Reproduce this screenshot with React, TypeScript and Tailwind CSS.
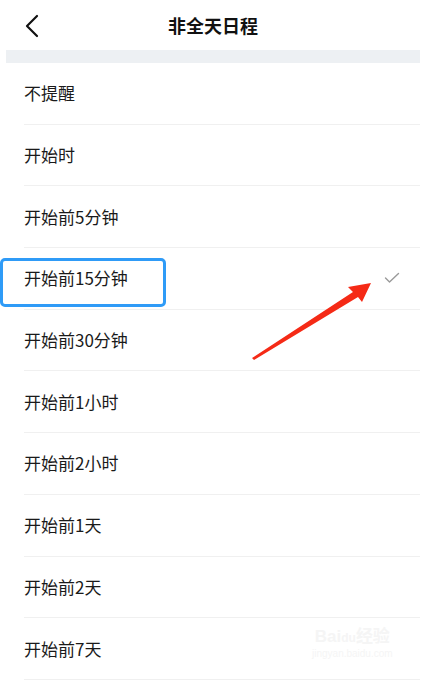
import React from "react";

const items = [
  "不提醒",
  "开始时",
  "开始前5分钟",
  "开始前15分钟",
  "开始前30分钟",
  "开始前1小时",
  "开始前2小时",
  "开始前1天",
  "开始前2天",
  "开始前7天",
];

export default function App() {
  return (
    <div
      className="relative w-[430px] h-[682px] overflow-hidden bg-white"
      style={{ fontFamily: '"Noto Sans CJK SC", "Noto Sans", sans-serif' }}
    >
      <div className="flex h-[50px] w-[426px] items-center justify-center relative">
        <svg
          className="absolute left-[24px] top-[14px]"
          width="16"
          height="24"
          viewBox="0 0 16 24"
          fill="none"
        >
          <path d="M13 2 L3 12 L13 22" stroke="#111" strokeWidth="2.2" strokeLinecap="round" strokeLinejoin="round" />
        </svg>
        <span className="text-[18px] font-bold text-[#111] leading-none">非全天日程</span>
      </div>
      <div className="ml-[6px] w-[414px] h-[13px] bg-[#edf0f3]" />
      <div className="w-[420px]">
        {items.map((t, i) => (
          <div key={t} className="ml-[24px] h-[61.7px] flex items-center justify-between border-b border-[#f0f0f0] pr-[20px]">
            <span className="text-[17px] text-[#1a1a1a] leading-none -mt-[1px]">{t}</span>
            {i === 3 && (
              <svg width="16" height="12" viewBox="0 0 16 12" fill="none">
                <path d="M1.5 6 L5.5 10 L14.5 1.5" stroke="#9a9a9a" strokeWidth="1.4" strokeLinecap="round" strokeLinejoin="round" />
              </svg>
            )}
          </div>
        ))}
      </div>

      {/* blue highlight box */}
      <div className="absolute left-[0px] top-[258px] w-[166px] h-[49px] border-[3px] border-[#2f9bf7] rounded-[5px]" />

      {/* red arrow */}
      <svg className="absolute left-0 top-0" width="430" height="682" viewBox="0 0 430 682">
        <path d="M252 358 L353 292 L348 287 L371 283 L362 302 L358 297 L254 360 Z" fill="#f52a16" />
      </svg>

      {/* watermark */}
      <div className="absolute left-[312px] top-[628px] flex flex-col items-center text-[#f5f5f5] leading-none">
        <span className="text-[17px] font-bold" style={{ fontFamily: '"Liberation Sans", "Noto Sans CJK SC", sans-serif' }}>
          Bai<span className="text-[12px]">du</span>经验
        </span>
        <span className="text-[10px] mt-[4px]" style={{ fontFamily: '"Liberation Sans", sans-serif' }}>jingyan.baidu.com</span>
      </div>
    </div>
  );
}
